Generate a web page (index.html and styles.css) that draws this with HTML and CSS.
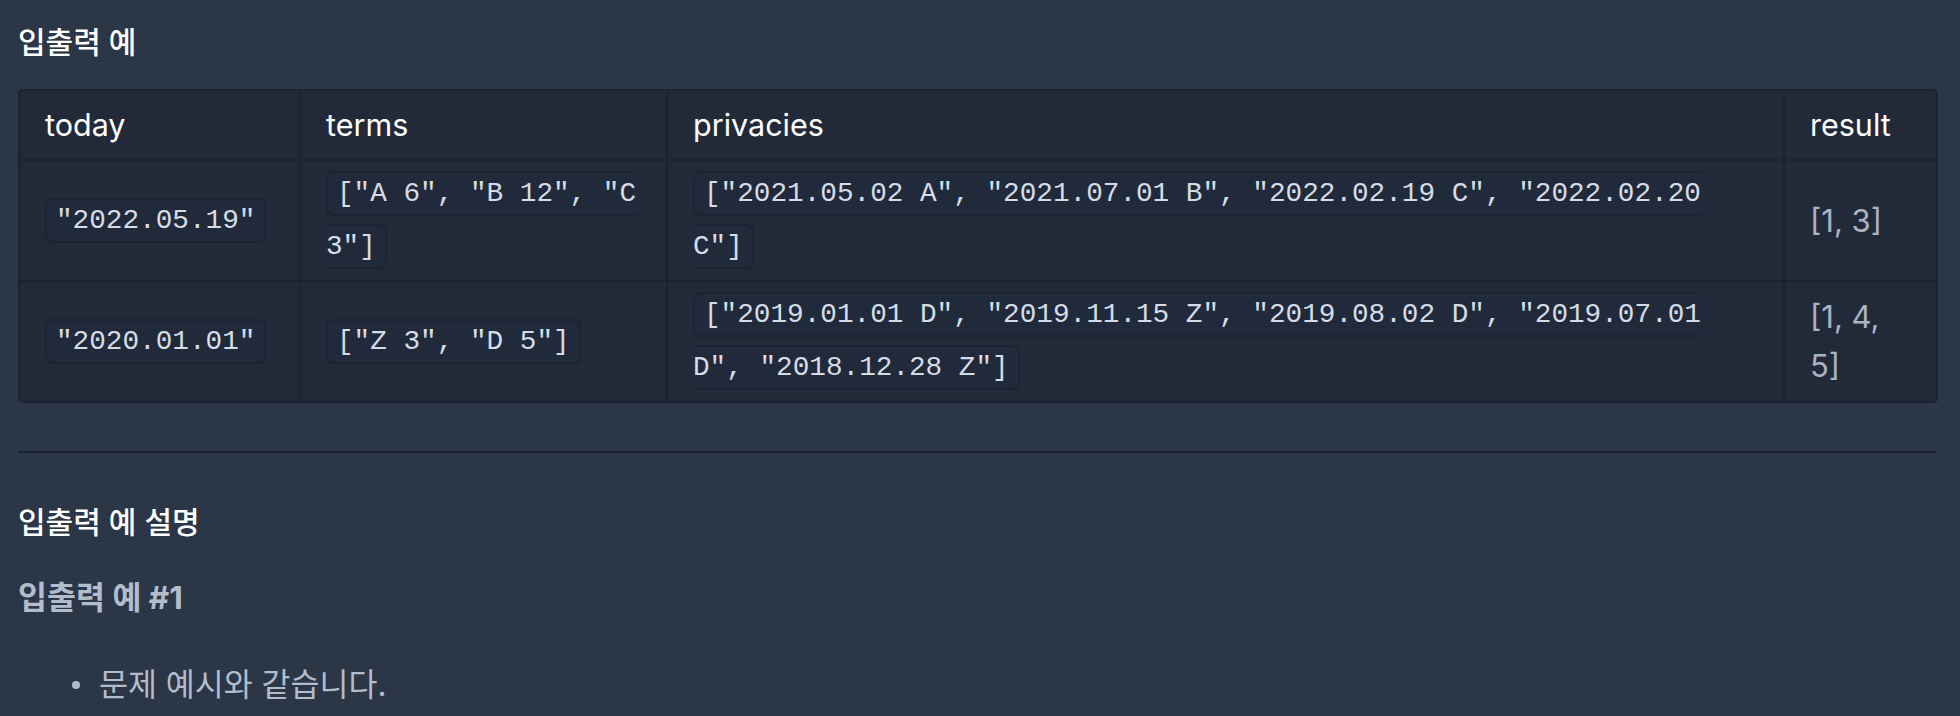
FILE: index.html
```html
<!DOCTYPE html>
<html lang="ko">
<head>
<meta charset="utf-8">
<title>입출력 예</title>
<link rel="stylesheet" href="styles.css">
</head>
<body>
<main class="page">
  <h5 class="section-title">입출력 예</h5>
  <table class="io-table">
    <colgroup>
      <col class="col-today">
      <col class="col-terms">
      <col class="col-privacies">
      <col class="col-result">
    </colgroup>
    <thead>
      <tr>
        <th>today</th>
        <th>terms</th>
        <th>privacies</th>
        <th>result</th>
      </tr>
    </thead>
    <tbody>
      <tr>
        <td><code>"2022.05.19"</code></td>
        <td><code>["A 6", "B 12", "C 3"]</code></td>
        <td><code>["2021.05.02 A", "2021.07.01 B", "2022.02.19 C", "2022.02.20 C"]</code></td>
        <td class="result">[1, 3]</td>
      </tr>
      <tr>
        <td><code>"2020.01.01"</code></td>
        <td><code>["Z 3", "D 5"]</code></td>
        <td><code>["2019.01.01 D", "2019.11.15 Z", "2019.08.02 D", "2019.07.01 D", "2018.12.28 Z"]</code></td>
        <td class="result">[1, 4, 5]</td>
      </tr>
    </tbody>
  </table>
  <hr class="divider">
  <h5 class="section-title explain">입출력 예 설명</h5>
  <h6 class="sub-title">입출력 예 #1</h6>
  <ul class="notes">
    <li>문제 예시와 같습니다.</li>
  </ul>
</main>
</body>
</html>
```

FILE: styles.css
```css
html, body {
  margin: 0;
  padding: 0;
  background: #2b3647;
}

body {
  font-family: "Inter", "Noto Sans CJK KR", sans-serif;
  color: #ffffff;
  font-size: 28px;
  line-height: 1.75;
  overflow: hidden;
}

.page {
  padding: 20px 24px 0 18px;
}

.section-title {
  margin: 0 0 24px;
  font-size: 30px;
  font-weight: 500;
  line-height: 45px;
  color: #ffffff;
}

.io-table {
  width: 100%;
  table-layout: fixed;
  border-collapse: separate;
  border-spacing: 0;
  background: #222a3a;
  border: 2px solid #1b2230;
  border-radius: 5px;
}

.col-today { width: 279px; }
.col-terms { width: 367px; }
.col-privacies { width: 1117px; }
.col-result { width: 153px; }

.io-table th,
.io-table td {
  text-align: left;
  vertical-align: middle;
  border-left: 2px solid #1b2230;
  padding: 6px 25px 7px;
  line-height: 49px;
}

.io-table th:first-child,
.io-table td:first-child {
  border-left: none;
}

.io-table th {
  font-size: 30.5px;
  font-weight: 400;
  color: #ffffff;
  padding: 9px 25px 10px;
}

.io-table td {
  border-top: 2px solid #1b2230;
  color: #d5dce5;
}

.io-table td.result {
  font-size: 31px;
  color: #a9b3c1;
}

code {
  font-family: "Liberation Mono", "DejaVu Sans Mono", monospace;
  font-size: 27.7px;
  line-height: 52px;
  color: #d5dce5;
  background: #212a3a;
  border: 2px solid #1c2331;
  border-radius: 7px;
  padding: 5px 9px;
}

.divider {
  margin: 48px 0 0;
  border: none;
  border-top: 2px solid #1c2331;
  height: 0;
}

.section-title.explain {
  margin: 47px 0 30px;
}

.sub-title {
  margin: 0;
  font-size: 31.5px;
  font-weight: 700;
  line-height: 45px;
  color: #b2bccb;
}

.notes {
  margin: 42px 0 0;
  padding: 0 0 0 54px;
  list-style: none;
  color: #b2bccb;
  font-size: 31.5px;
  line-height: 45px;
}

.notes li::before {
  content: "";
  display: inline-block;
  width: 8px;
  height: 8px;
  border-radius: 50%;
  background: #b2bccb;
  margin-right: 19px;
  vertical-align: middle;
  position: relative;
  top: -2px;
}
```
